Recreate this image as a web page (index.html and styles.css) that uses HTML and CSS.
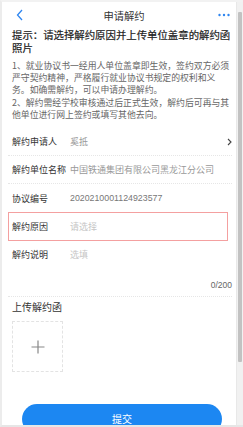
FILE: index.html
```html
<!DOCTYPE html>
<html lang="zh">
<head>
<meta charset="utf-8">
<title>申请解约</title>
<link rel="stylesheet" href="styles.css">
</head>
<body>
<div class="frame">
  <div class="page">
    <header class="nav">
      <svg class="back" width="8" height="12" viewBox="0 0 8 12"><polyline points="6,1 1.5,6 6,11" fill="none" stroke="#2f86f0" stroke-width="1.3"/></svg>
      <div class="title">申请解约</div>
      <svg class="more" width="12" height="4" viewBox="0 0 12 4"><circle cx="1.5" cy="2" r="1.2" fill="#2f86f0"/><circle cx="6" cy="2" r="1.2" fill="#2f86f0"/><circle cx="10.5" cy="2" r="1.2" fill="#2f86f0"/></svg>
    </header>
    <div class="tip">提示：请选择解约原因并上传单位盖章的解约函照片</div>
    <div class="notes">1、就业协议书一经用人单位盖章即生效，签约双方必须严守契约精神，严格履行就业协议书规定的权利和义务。如确需解约，可以申请办理解约。<br>2、解约需经学校审核通过后正式生效，解约后可再与其他单位进行网上签约或填写其他去向。</div>
    <div class="form">
      <div class="row line">
        <span class="label">解约申请人</span>
        <span class="value">奚抵</span>
        <svg class="arrow" width="5" height="8" viewBox="0 0 5 8"><polyline points="1,1 4,4 1,7" fill="none" stroke="#444" stroke-width="1.1"/></svg>
      </div>
      <div class="row line">
        <span class="label">解约单位名称</span>
        <span class="value">中国铁通集团有限公司黑龙江分公司</span>
      </div>
      <div class="row">
        <span class="label">协议编号</span>
        <span class="value num">2020210001124923577</span>
      </div>
      <div class="row error">
        <span class="label">解约原因</span>
        <span class="placeholder">请选择</span>
      </div>
      <div class="row desc">
        <span class="label">解约说明</span>
        <span class="placeholder">选填</span>
      </div>
      <div class="count">0/200</div>
    </div>
    <div class="upload">
      <div class="upload-title">上传解约函</div>
      <div class="upload-box">
        <svg width="14" height="14" viewBox="0 0 14 14"><path d="M7 0.5V13.5M0.5 7H13.5" stroke="#888" stroke-width="1.2"/></svg>
      </div>
    </div>
    <div class="actions">
      <button class="submit">提交</button>
    </div>
  </div>
  <div class="scrollbar"><div class="thumb"></div></div>
</div>
</body>
</html>
```
FILE: styles.css
```css
* { box-sizing: border-box; }
html, body { margin: 0; padding: 0; }
body {
  width: 243px;
  height: 427px;
  overflow: hidden;
  background: #fff;
  font-family: "Noto Sans CJK SC", "Noto Sans", sans-serif;
  color: #333;
}
.frame {
  display: flex;
  width: 243px;
  height: 427px;
  border-left: 2px solid #ececec;
  border-top: 2px solid #f2f2f2;
  border-bottom: 2px solid #e6e6e6;
  overflow: hidden;
}
.page {
  flex: 1;
  min-width: 0;
  overflow: hidden;
}
.nav {
  display: flex;
  align-items: center;
  justify-content: space-between;
  height: 26px;
  padding: 0 6px 0 14px;
}
.back { display: block; }
.title {
  font-size: 10.3px;
  color: #333;
  margin-left: 6px;
}
.more { display: block; }
.tip {
  padding: 0 4px 0 10px;
  font-size: 10.4px;
  line-height: 13px;
  font-weight: 400;
  color: #222;
  -webkit-text-stroke: 0.2px #222;
  margin-bottom: 6px;
}
.notes {
  padding: 0 3px 0 10px;
  font-size: 8.85px;
  line-height: 12.2px;
  color: #666;
  margin-bottom: 7px;
}
.form {
  padding: 0 0 0 6px;
}
.row {
  display: flex;
  align-items: center;
  height: 28px;
  padding: 0 0 0 4px;
  width: 224px;
  font-size: 9px;
}
.row.line { border-bottom: 1px dotted #e6e6e6; }
.label {
  width: 58px;
  flex: none;
  color: #333;
}
.value { color: #999; flex: 1; white-space: nowrap; }
.value.num { font-family: "Liberation Sans", Arial, sans-serif; font-size: 8.8px; color: #777; }
.placeholder { color: #c6c6c6; flex: 1; }
.arrow { display: block; margin-right: 0; }
.row.error {
  height: 29px;
  width: 220px;
  border: 1px solid #f4a0a0;
  padding-left: 3px;
}
.row.desc { height: 27px; }
.count {
  width: 224px;
  text-align: right;
  font-family: "Liberation Sans", Arial, sans-serif;
  font-size: 8.5px;
  color: #666;
  padding-top: 12px;
  padding-bottom: 6px;
  border-bottom: 1px dotted #e6e6e6;
}
.upload {
  padding: 3px 0 0 10px;
}
.upload-title {
  font-size: 10px;
  line-height: 14px;
  color: #333;
}
.upload-box {
  margin-top: 7px;
  width: 51px;
  height: 51px;
  border: 1px dashed #e3e3e3;
  display: flex;
  align-items: center;
  justify-content: center;
}
.actions {
  padding: 32px 0 0 20px;
}
.submit {
  display: flex;
  align-items: center;
  justify-content: center;
  width: 200px;
  height: 30px;
  border: none;
  border-radius: 15px;
  background: #1c87f2;
  color: #fff;
  font-family: "Noto Sans CJK SC", sans-serif;
  font-size: 10px;
  padding: 0 0 2px 0;
}
.scrollbar {
  width: 7px;
  flex: none;
  background: #f1f1f1;
  border-left: 1px solid #e8e8e8;
  padding: 10px 1px 0 1px;
}
.thumb {
  height: 350px;
  background: #c2c2c2;
  border-radius: 1px;
}
```
